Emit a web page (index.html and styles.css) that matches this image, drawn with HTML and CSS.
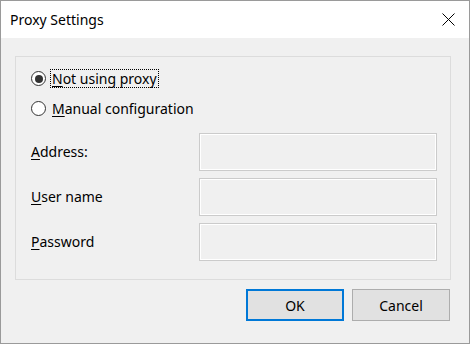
FILE: index.html
```html
<!DOCTYPE html>
<html>
<head>
<meta charset="utf-8">
<link rel="stylesheet" href="styles.css">
</head>
<body>
<div class="window">
  <div class="titlebar">
    <span class="title">Proxy Settings</span>
    <span class="close">
      <svg width="13" height="13" viewBox="0 0 13 13"><path d="M0.5 0.5 L12.5 12.5 M12.5 0.5 L0.5 12.5" stroke="#000" stroke-width="1" fill="none"/></svg>
    </span>
  </div>
  <div class="content">
    <div class="group">
      <div class="radio-row">
        <span class="radio checked"></span>
        <span class="radio-label focused"><u>N</u>ot using proxy</span>
      </div>
      <div class="radio-row second">
        <span class="radio"></span>
        <span class="radio-label"><u>M</u>anual configuration</span>
      </div>
      <div class="fields">
        <div class="field-row">
          <span class="field-label"><u>A</u>ddress:</span>
          <span class="textbox"></span>
        </div>
        <div class="field-row">
          <span class="field-label"><u>U</u>ser name</span>
          <span class="textbox"></span>
        </div>
        <div class="field-row">
          <span class="field-label"><u>P</u>assword</span>
          <span class="textbox"></span>
        </div>
      </div>
    </div>
    <div class="buttons">
      <span class="btn default">OK</span>
      <span class="btn">Cancel</span>
    </div>
  </div>
</div>
</body>
</html>
```
FILE: styles.css
```css
html, body {
  margin: 0;
  padding: 0;
  background: #f0f0f0;
}
body {
  font-family: "Segoe UI", "Noto Sans", "Liberation Sans", sans-serif;
  font-size: 14px;
  color: #000;
}
.window {
  width: 470px;
  height: 344px;
  box-sizing: border-box;
  border: 1px solid #9a9a9a;
  background: #f0f0f0;
  display: flex;
  flex-direction: column;
}
.titlebar {
  height: 37px;
  background: #fff;
  display: flex;
  align-items: center;
  justify-content: space-between;
  padding-left: 9px;
  padding-right: 14px;
}
.title {
  line-height: 20px;
  margin-top: 0px;
}
.close {
  display: flex;
  width: 13px;
  height: 13px;
  margin-top: -1px;
}
.content {
  padding: 18px 18px 0 14px;
  display: flex;
  flex-direction: column;
}
.group {
  height: 224px;
  box-sizing: border-box;
  border: 1px solid #dcdcdc;
  padding: 12px 13px 18px 15px;
  display: flex;
  flex-direction: column;
}
.radio-row {
  height: 19px;
  display: flex;
  align-items: center;
}
.radio-row.second {
  margin-top: 11px;
}
.radio {
  width: 15px;
  height: 15px;
  box-sizing: border-box;
  border: 1px solid #333;
  border-radius: 50%;
  background: #fff;
  display: flex;
  align-items: center;
  justify-content: center;
  flex: none;
}
.radio.checked::after {
  content: "";
  width: 8px;
  height: 8px;
  border-radius: 50%;
  background: #333;
}
.radio-label {
  margin-left: 4px;
  line-height: 17px;
  padding: 0 1px;
  border: 1px dotted transparent;
}
.radio-label.focused {
  border-color: #000;
}
u {
  text-decoration-thickness: 1px;
  text-underline-offset: 2px;
}
.fields {
  margin-top: 15px;
  display: flex;
  flex-direction: column;
  gap: 7px;
}
.field-row {
  display: flex;
  align-items: center;
  justify-content: space-between;
}
.field-label {
  line-height: 20px;
}
.textbox {
  width: 238px;
  height: 38px;
  box-sizing: border-box;
  border: 1px solid #cbcbcb;
  box-shadow: inset 0 0 0 1px #fff;
  background: #f0f0f0;
}
.buttons {
  margin-top: 9px;
  display: flex;
  justify-content: flex-end;
  gap: 8px;
  padding-right: 1px;
}
.btn {
  width: 98px;
  height: 32px;
  box-sizing: border-box;
  border: 1px solid #adadad;
  background: #e1e1e1;
  display: flex;
  align-items: center;
  justify-content: center;
}
.btn.default {
  border: 2px solid #0078d7;
}
```
